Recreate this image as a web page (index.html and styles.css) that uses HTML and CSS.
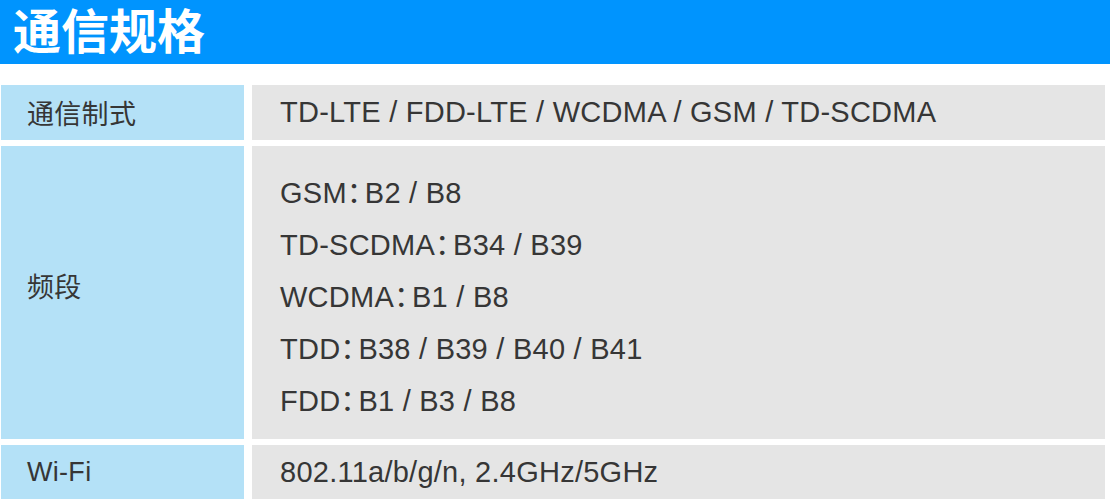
FILE: index.html
```html
<!DOCTYPE html>
<html lang="zh-CN">
<head>
<meta charset="utf-8">
<title>通信规格</title>
<link rel="stylesheet" href="styles.css">
</head>
<body>
<header class="title-bar"><h1 class="title">通信规格</h1></header>
<div class="spec-table">
  <div class="row">
    <div class="label">通信制式</div>
    <div class="value">TD-LTE / FDD-LTE / WCDMA / GSM / TD-SCDMA</div>
  </div>
  <div class="row">
    <div class="label label-tall">频段</div>
    <div class="value multi">
      <div class="line">GSM<span class="colon">：</span>B2 / B8</div>
      <div class="line">TD-SCDMA<span class="colon">：</span>B34 / B39</div>
      <div class="line">WCDMA<span class="colon">：</span>B1 / B8</div>
      <div class="line">TDD<span class="colon">：</span>B38 / B39 / B40 / B41</div>
      <div class="line">FDD<span class="colon">：</span>B1 / B3 / B8</div>
    </div>
  </div>
  <div class="row">
    <div class="label">Wi-Fi</div>
    <div class="value">802.11a/b/g/n, 2.4GHz/5GHz</div>
  </div>
</div>
</body>
</html>
```
FILE: styles.css
```css
body {
  margin: 0;
  background: #ffffff;
  font-family: "Liberation Sans", "Noto Sans CJK SC", sans-serif;
  color: #363636;
}

.title-bar {
  height: 64px;
  background: #0094fe;
  display: flex;
  align-items: center;
  padding-left: 13px;
}

.title {
  margin: 1px 0 0 0;
  font-family: "Liberation Sans", "Noto Sans CJK SC", sans-serif;
  font-size: 48px;
  font-weight: 700;
  line-height: 56px;
  color: #ffffff;
}

.spec-table {
  margin: 21px 5px 0 1px;
  display: flex;
  flex-direction: column;
  gap: 6px;
}

.row {
  display: grid;
  grid-template-columns: 243px 1fr;
  gap: 8px;
  min-height: 55px;
}

.label {
  background: #b4e1f7;
  padding-left: 26px;
  display: flex;
  align-items: center;
  font-size: 27px;
  letter-spacing: 0.3px;
}

.label-tall {
  padding-bottom: 14px;
}

.value {
  background: #e5e5e5;
  padding-left: 28px;
  display: flex;
  align-items: center;
  font-size: 29px;
  letter-spacing: 0.25px;
}

.value.multi {
  flex-direction: column;
  align-items: flex-start;
  justify-content: center;
  padding: 21px 0 12px 28px;
}

.line {
  line-height: 52px;
}

.colon {
  letter-spacing: -12px;
  margin-right: 1px;
}
```
